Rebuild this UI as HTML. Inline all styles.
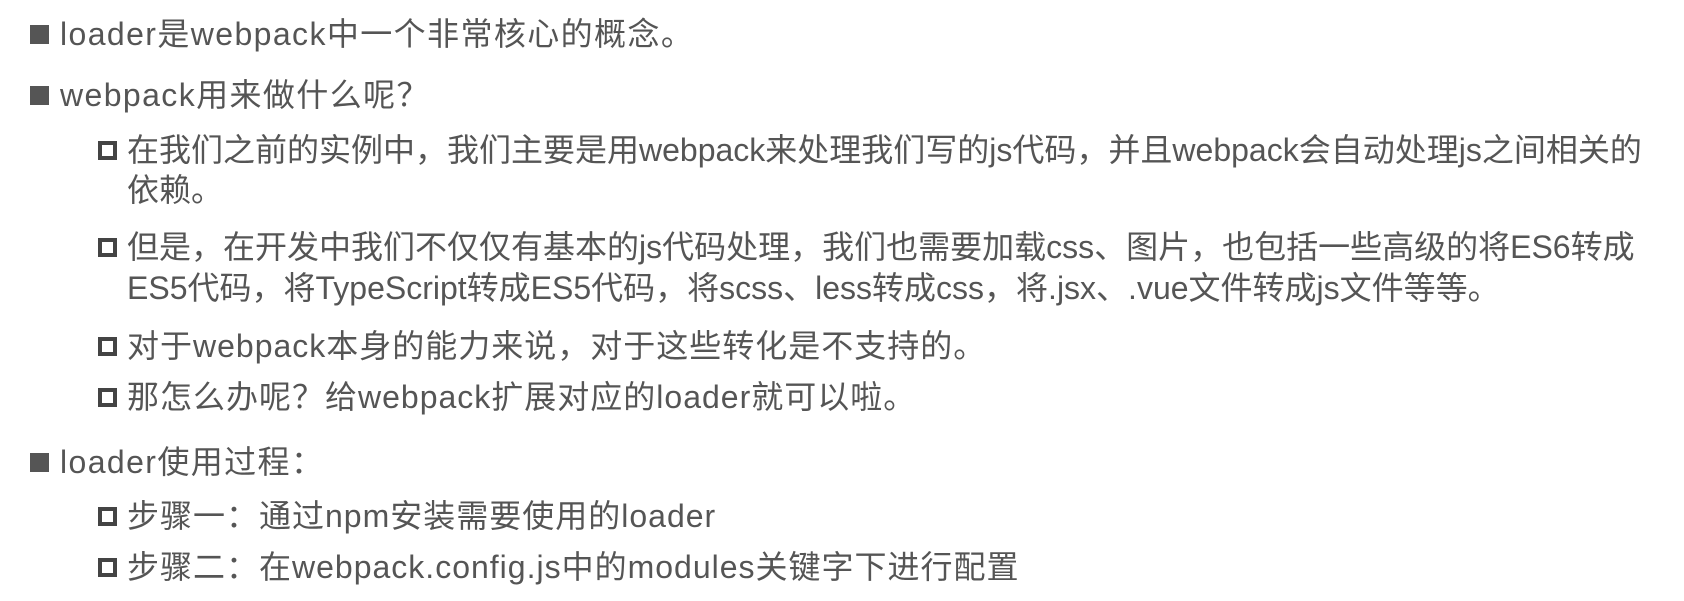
<!DOCTYPE html>
<html><head><meta charset="utf-8"><style>
body{margin:0;width:1684px;height:601px;background:#fff;overflow:hidden;font-family:"Liberation Sans","Noto Sans CJK SC",sans-serif;color:#555;font-size:32px;}
.l{position:absolute;white-space:nowrap;line-height:40px;}
.b1{letter-spacing:1.4px}
.b1:before{content:"";position:absolute;left:-30px;top:11px;width:19px;height:19px;background:#555;}
.b2:before{content:"";position:absolute;left:-29px;top:11px;width:11px;height:11px;border:4px solid #444;}
.s{letter-spacing:1px}
</style></head><body>
<div class="l b1" style="left:60px;top:14px">loader是webpack中一个非常核心的概念。</div>
<div class="l b1" style="left:60px;top:75px">webpack用来做什么呢？</div>
<div class="l b2" style="left:127px;top:130px">在我们之前的实例中，我们主要是用webpack来处理我们写的js代码，并且webpack会自动处理js之间相关的</div>
<div class="l" style="left:127px;top:170px">依赖。</div>
<div class="l b2" style="left:127px;top:227px">但是，在开发中我们不仅仅有基本的js代码处理，我们也需要加载css、图片，也包括一些高级的将ES6转成</div>
<div class="l" style="left:127px;top:268px">ES5代码，将TypeScript转成ES5代码，将scss、less转成css，将.jsx、.vue文件转成js文件等等。</div>
<div class="l b2 s" style="left:127px;top:326px">对于webpack本身的能力来说，对于这些转化是不支持的。</div>
<div class="l b2 s" style="left:127px;top:377px">那怎么办呢？给webpack扩展对应的loader就可以啦。</div>
<div class="l b1" style="left:60px;top:442px">loader使用过程：</div>
<div class="l b2 s" style="left:127px;top:496px">步骤一：通过npm安装需要使用的loader</div>
<div class="l b2 s" style="left:127px;top:547px">步骤二：在webpack.config.js中的modules关键字下进行配置</div>
</body></html>
